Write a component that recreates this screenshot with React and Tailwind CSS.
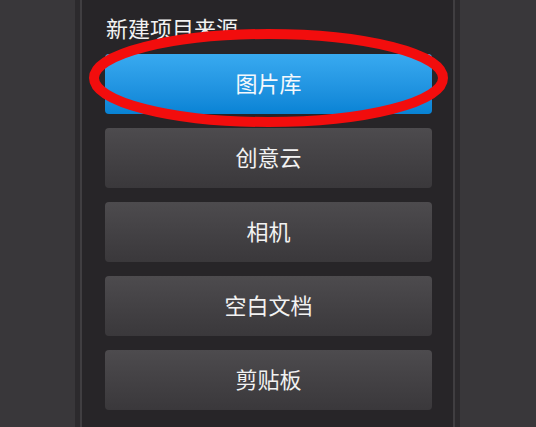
export default function App() {
  const items = ["创意云", "相机", "空白文档", "剪贴板"];
  return (
    <div
      className="relative flex h-[427px] w-[536px] overflow-hidden bg-[#39373a]"
      style={{ fontFamily: '"Noto Sans CJK SC", "Noto Sans", sans-serif' }}
    >
      <div className="w-[75px] shrink-0 bg-[#39373a]" />
      <div className="w-[5px] shrink-0 bg-[#2c2a2d]" />
      <div className="w-[2px] shrink-0 bg-[#403e41]" />
      <div className="flex w-[371px] shrink-0 flex-col bg-[#272528] pl-[23px] pr-[21px] pt-[16px]">
        <div className="pl-[1px] text-[22px] leading-[22px] text-[#f2f2f2]">新建项目来源</div>
        <div className="mt-[16px] flex flex-col gap-[14px]">
          <div className="flex h-[60px] items-center justify-center rounded-[4px] bg-gradient-to-b from-[#38aaf0] to-[#0783d5] pb-[3px] text-[22px] text-[#f5f8fc]">
            图片库
          </div>
          {items.map((t) => (
            <div
              key={t}
              className="flex h-[60px] items-center justify-center rounded-[4px] bg-gradient-to-b from-[#4d4b4e] to-[#3a383b] pb-[3px] text-[22px] text-[#f2f2f2]"
            >
              {t}
            </div>
          ))}
        </div>
      </div>
      <div className="w-[2px] shrink-0 bg-[#403e41]" />
      <div className="w-[5px] shrink-0 bg-[#2c2a2d]" />
      <div className="flex-1 bg-[#39373a]" />
      <svg className="pointer-events-none absolute left-0 top-0" width="536" height="427">
        <ellipse cx="268.5" cy="78" rx="174.5" ry="44" fill="none" stroke="#f20d0d" strokeWidth="10" />
      </svg>
    </div>
  );
}
